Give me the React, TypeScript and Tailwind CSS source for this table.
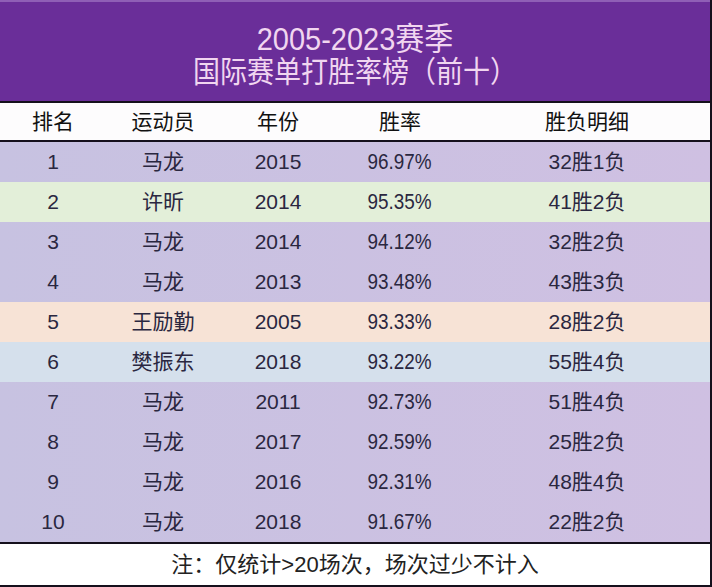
const lav = "bg-gradient-to-r from-[#c7c2e1] to-[#cfc0e2]";

const rows = [
  { rank: "1", name: "马龙", year: "2015", rate: "96.97%", detail: "32胜1负", bg: lav },
  { rank: "2", name: "许昕", year: "2014", rate: "95.35%", detail: "41胜2负", bg: "bg-[#e3efd9]" },
  { rank: "3", name: "马龙", year: "2014", rate: "94.12%", detail: "32胜2负", bg: lav },
  { rank: "4", name: "马龙", year: "2013", rate: "93.48%", detail: "43胜3负", bg: lav },
  { rank: "5", name: "王励勤", year: "2005", rate: "93.33%", detail: "28胜2负", bg: "bg-[#f7e3d6]" },
  { rank: "6", name: "樊振东", year: "2018", rate: "93.22%", detail: "55胜4负", bg: "bg-[#d5e0ec]" },
  { rank: "7", name: "马龙", year: "2011", rate: "92.73%", detail: "51胜4负", bg: lav },
  { rank: "8", name: "马龙", year: "2017", rate: "92.59%", detail: "25胜2负", bg: lav },
  { rank: "9", name: "马龙", year: "2016", rate: "92.31%", detail: "48胜4负", bg: lav },
  { rank: "10", name: "马龙", year: "2018", rate: "91.67%", detail: "22胜2负", bg: lav },
];

const cols = "grid grid-cols-[106px_114px_116px_128px_1fr]";

export default function App() {
  return (
    <div className="w-[712px] h-[587px] bg-white font-['Liberation_Sans','Noto_Sans_CJK_SC',sans-serif] border-r-2 border-b-2 border-[#15101c] overflow-hidden">
      {/* title */}
      <div className="h-[101px] bg-[#6a2e99] flex flex-col items-center pt-[21px] text-[#f1d6f0] border-t-2 border-[#8f5fb6]">
        <div className="text-[29px] leading-[33px] scale-y-110">2005-2023赛季</div>
        <div className="text-[27px] leading-[33px] scale-y-110">国际赛单打胜率榜（前十）</div>
      </div>

      {/* header */}
      <div className={`${cols} h-[41px] items-center border-y-2 border-[#15101c] text-[21px] text-[#111] bg-[#fdfcfd]`}>
        <div className="text-center">排名</div>
        <div className="text-center">运动员</div>
        <div className="text-center">年份</div>
        <div className="text-center">胜率</div>
        <div className="text-center">胜负明细</div>
      </div>

      {/* rows */}
      <div>
        {rows.map((r) => (
          <div key={r.rank} className={`${cols} h-[40px] items-center text-[21px] text-[#2a2740] ${r.bg}`}>
            <div className="text-center">{r.rank}</div>
            <div className="text-center">{r.name}</div>
            <div className="text-center">{r.year}</div>
            <div className="text-center"><span className="inline-block scale-x-90 scale-y-105">{r.rate}</span></div>
            <div className="text-center">{r.detail}</div>
          </div>
        ))}
      </div>

      {/* note */}
      <div className="h-[42px] border-t-2 border-[#15101c] flex items-center justify-center text-[22px] text-[#222]">
        注：仅统计&gt;20场次，场次过少不计入
      </div>
    </div>
  );
}
